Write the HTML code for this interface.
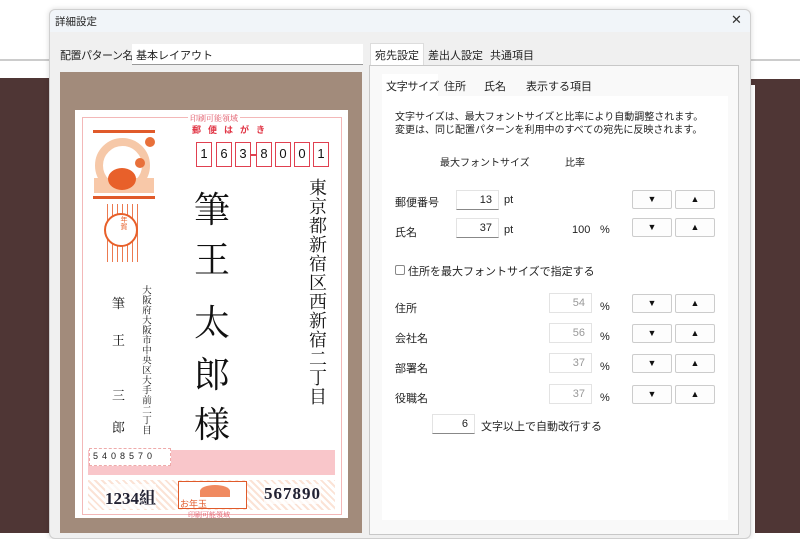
<!DOCTYPE html>
<html><head><meta charset="utf-8"><style>
*{box-sizing:border-box;margin:0;padding:0}
body{width:800px;height:533px;overflow:hidden;background:#fff;position:relative;font-family:"Liberation Sans","Noto Sans CJK JP",sans-serif;font-size:11px;color:#222}
.a{position:absolute}
.m{font-family:"Liberation Serif","Noto Serif CJK SC",serif}
.v{writing-mode:vertical-rl}
.btn{position:absolute;width:40px;height:19px;background:#fdfdfd;border:1px solid #ccc;border-radius:2px;font-size:9px;text-align:center;line-height:17px;color:#111}
.in{position:absolute;width:43px;height:20px;background:#fff;border:1px solid #e3e3e3;border-bottom:1px solid #888;text-align:right;padding-right:6px;line-height:18px;font-size:11px}
.dis{border-bottom:1px solid #e3e3e3;color:#999}
.zb{position:absolute;top:142px;width:16px;height:25px;border:1.5px solid #e04050;font-size:13px;text-align:center;line-height:22px;color:#111}
</style></head><body>
<div class="a" style="left:0;top:59px;width:800px;height:2px;background:#ccc"></div>
<div class="a" style="left:0;top:78px;width:52px;height:455px;background:#4f3635"></div>
<div class="a" style="left:748px;top:79px;width:52px;height:454px;background:#4f3635"></div>
<div class="a" style="left:748px;top:85px;width:7px;height:448px;background:#fff"></div>
<!-- dialog -->
<div class="a" style="left:49px;top:9px;width:702px;height:530px;background:#f0f0f0;border:1px solid #cfcfcf;border-radius:6px;box-shadow:0 0 6px rgba(0,0,0,.15)"></div>
<div class="a" style="left:50px;top:10px;width:700px;height:22px;background:#f1f5f9;border-radius:6px 6px 0 0"></div>
<div class="a" style="left:55px;top:14px;font-size:10.5px">詳細設定</div>
<div class="a" style="left:731px;top:12px;font-size:13px;color:#333">✕</div>
<div class="a" style="left:60px;top:47px;font-size:11px;letter-spacing:-0.5px">配置パターン名</div>
<div class="a" style="left:132px;top:44px;width:231px;height:21px;background:#fff;border-bottom:1px solid #999;padding:3px 4px;font-size:11px">基本レイアウト</div>
<div class="a" style="left:60px;top:72px;width:302px;height:461px;background:#a28b7b"></div>
<!-- postcard -->
<div class="a" style="left:75px;top:110px;width:273px;height:408px;background:#fff"></div>
<div class="a" style="left:82px;top:117px;width:260px;height:398px;border:1px solid #f3b8b8"></div>
<div class="a m" style="left:188px;top:113px;font-size:8px;color:#e05060;background:#fff;padding:0 2px">印刷可能領域</div>
<div class="a" style="left:192px;top:123px;font-size:9px;color:#e03040;letter-spacing:7px;font-weight:bold">郵便はがき</div>
<div class="zb" style="left:196px">1</div><div class="zb" style="left:216px">6</div><div class="zb" style="left:235px">3</div>
<div class="a" style="left:251px;top:154px;width:5px;height:2px;background:#e04050"></div>
<div class="zb" style="left:256px">8</div><div class="zb" style="left:275px">0</div><div class="zb" style="left:294px">0</div><div class="zb" style="left:313px">1</div>
<!-- illustration -->
<div class="a" style="left:93px;top:130px;width:62px;height:3px;background:#e05a2a"></div>
<div class="a" style="left:95px;top:138px;width:55px;height:55px;border-radius:50%;border:8px solid #f6c8a8"></div>
<div class="a" style="left:94px;top:178px;width:60px;height:15px;background:#f8c8a8"></div>
<div class="a" style="left:108px;top:168px;width:28px;height:22px;border-radius:50%;background:#e8602a"></div>
<div class="a" style="left:145px;top:137px;width:10px;height:10px;border-radius:50%;background:#e8703a"></div>
<div class="a" style="left:135px;top:158px;width:10px;height:10px;border-radius:50%;background:#e8703a"></div>
<div class="a" style="left:93px;top:196px;width:62px;height:3px;background:#e05a2a"></div>
<div class="a" style="left:107px;top:204px;width:32px;height:58px;background:repeating-linear-gradient(90deg,#ec7a50 0 1px,transparent 1px 5px)"></div>
<div class="a" style="left:104px;top:213px;width:34px;height:34px;border-radius:50%;border:2px solid #e8602a;background:#fff"></div>
<div class="a" style="left:118px;top:216px;font-size:7px;color:#e8602a;writing-mode:vertical-rl">年賀</div>
<!-- addresses -->
<div class="a m v" style="left:306px;top:178px;font-size:18px;line-height:22px;letter-spacing:1px;color:#111">東京都新宿区西新宿二丁目</div>
<div class="a m" style="left:194px;top:190px;font-size:36px;line-height:40px;color:#111">筆</div>
<div class="a m" style="left:194px;top:240px;font-size:36px;line-height:40px;color:#111">王</div>
<div class="a m" style="left:194px;top:303px;font-size:36px;line-height:40px;color:#111">太</div>
<div class="a m" style="left:194px;top:355px;font-size:36px;line-height:40px;color:#111">郎</div>
<div class="a m" style="left:194px;top:405px;font-size:36px;line-height:40px;color:#111">様</div>
<div class="a m v" style="left:139px;top:285px;font-size:9.5px;line-height:11px;letter-spacing:0.5px;color:#111">大阪府大阪市中央区大手前二丁目</div>
<div class="a m" style="left:112px;top:293px;font-size:13px;color:#111">筆</div>
<div class="a m" style="left:112px;top:330px;font-size:13px;color:#111">王</div>
<div class="a m" style="left:112px;top:385px;font-size:13px;color:#111">三</div>
<div class="a m" style="left:112px;top:417px;font-size:13px;color:#111">郎</div>
<div class="a" style="left:88px;top:450px;width:247px;height:25px;background:#f9c6ca"></div>
<div class="a" style="left:89px;top:448px;width:82px;height:18px;background:#fff;border:1px dashed #eaa;font-size:9px;letter-spacing:4px;padding:2px 0 0 3px">5408570</div>
<div class="a" style="left:88px;top:480px;width:247px;height:30px;background:repeating-linear-gradient(45deg,#fbe3d6 0 2px,#fff 2px 5px)"></div>
<div class="a m" style="left:105px;top:484px;font-size:17px;font-weight:bold;color:#223;background:rgba(255,255,255,.7)">1234組</div>
<div class="a" style="left:178px;top:481px;width:69px;height:28px;border:1px solid #e05a2a;background:#fff"></div>
<div class="a" style="left:200px;top:485px;width:30px;height:12px;border-radius:50% 50% 0 0;background:#f08a60"></div>
<div class="a" style="left:180px;top:497px;font-size:9px;color:#e05a2a">お年玉</div>
<div class="a m" style="left:264px;top:484px;font-size:17px;font-weight:bold;color:#223;letter-spacing:1px;background:rgba(255,255,255,.7)">567890</div>
<div class="a m" style="left:188px;top:510px;font-size:7px;color:#e05060">印刷可能領域</div>
<!-- right tabs -->
<div class="a" style="left:370px;top:43px;width:54px;height:23px;background:#fff;border:1px solid #ddd;border-bottom:none"></div>
<div class="a" style="left:375px;top:47px;font-size:11px">宛先設定</div>
<div class="a" style="left:428px;top:47px;font-size:11px">差出人設定</div>
<div class="a" style="left:490px;top:47px;font-size:11px">共通項目</div>
<div class="a" style="left:369px;top:65px;width:370px;height:470px;background:#f9f9f9;border:1px solid #c8c8c8"></div>
<div class="a" style="left:382px;top:74px;width:56px;height:23px;background:#fff"></div>
<div class="a" style="left:386px;top:78px;font-size:11px;letter-spacing:-0.3px">文字サイズ</div>
<div class="a" style="left:444px;top:78px;font-size:11px">住所</div>
<div class="a" style="left:484px;top:78px;font-size:11px">氏名</div>
<div class="a" style="left:526px;top:78px;font-size:11px">表示する項目</div>
<div class="a" style="left:382px;top:96px;width:346px;height:424px;background:#fff"></div>
<div class="a" style="left:395px;top:111px;font-size:10px;line-height:13px">文字サイズは、最大フォントサイズと比率により自動調整されます。<br>変更は、同じ配置パターンを利用中のすべての宛先に反映されます。</div>
<div class="a" style="left:440px;top:154px;font-size:10px">最大フォントサイズ</div>
<div class="a" style="left:565px;top:154px;font-size:10px">比率</div>
<div class="a" style="left:395px;top:194px">郵便番号</div>
<div class="in" style="left:456px;top:190px">13</div><div class="a" style="left:504px;top:194px">pt</div>
<div class="btn" style="left:632px;top:190px">▼</div><div class="btn" style="left:675px;top:190px">▲</div>
<div class="a" style="left:395px;top:224px">氏名</div>
<div class="in" style="left:456px;top:218px">37</div><div class="a" style="left:504px;top:224px">pt</div>
<div class="a" style="left:572px;top:224px">100</div><div class="a" style="left:600px;top:224px">%</div>
<div class="btn" style="left:632px;top:218px">▼</div><div class="btn" style="left:675px;top:218px">▲</div>
<div class="a" style="left:395px;top:265px;width:10px;height:10px;border:1px solid #888;border-radius:2px"></div>
<div class="a" style="left:408px;top:263px">住所を最大フォントサイズで指定する</div>
<div class="a" style="left:395px;top:300px">住所</div><div class="in dis" style="left:549px;top:293px">54</div><div class="a" style="left:600px;top:301px">%</div>
<div class="btn" style="left:632px;top:294px">▼</div><div class="btn" style="left:675px;top:294px">▲</div>
<div class="a" style="left:395px;top:330px">会社名</div><div class="in dis" style="left:549px;top:323px">56</div><div class="a" style="left:600px;top:331px">%</div>
<div class="btn" style="left:632px;top:324px">▼</div><div class="btn" style="left:675px;top:324px">▲</div>
<div class="a" style="left:395px;top:360px">部署名</div><div class="in dis" style="left:549px;top:353px">37</div><div class="a" style="left:600px;top:361px">%</div>
<div class="btn" style="left:632px;top:354px">▼</div><div class="btn" style="left:675px;top:354px">▲</div>
<div class="a" style="left:395px;top:390px">役職名</div><div class="in dis" style="left:549px;top:384px">37</div><div class="a" style="left:600px;top:392px">%</div>
<div class="btn" style="left:632px;top:385px">▼</div><div class="btn" style="left:675px;top:385px">▲</div>
<div class="in" style="left:432px;top:414px">6</div>
<div class="a" style="left:481px;top:418px">文字以上で自動改行する</div>
</body></html>
